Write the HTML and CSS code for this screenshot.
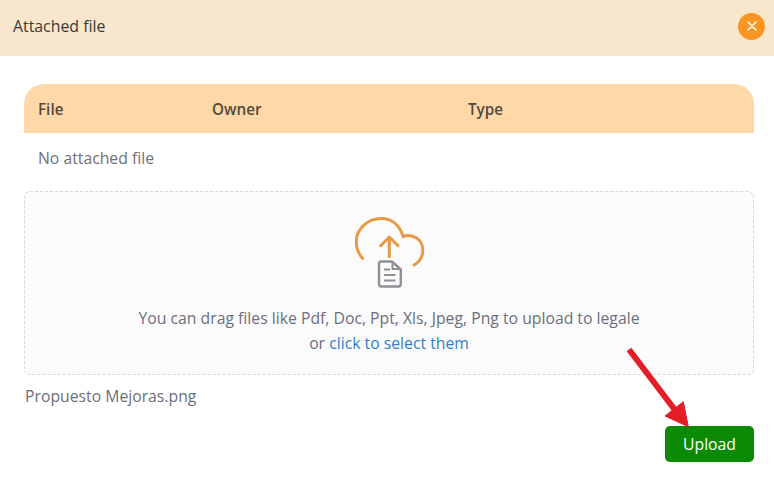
FILE: index.html
```html
<!DOCTYPE html>
<html lang="en">
<head>
<meta charset="utf-8">
<title>Attached file</title>
<link rel="stylesheet" href="styles.css">
</head>
<body>
<div class="dialog">
  <header class="dialog-header">
    <h1 class="dialog-title">Attached file</h1>
    <button class="close" aria-label="Close">
      <svg width="10" height="10" viewBox="0 0 10 10"><path d="M1 1l8 8M9 1l-8 8" stroke="#fff" stroke-width="1.5" stroke-linecap="round" fill="none"/></svg>
    </button>
  </header>
  <main class="dialog-body">
    <section class="table">
      <div class="table-head">
        <span class="col col-file">File</span>
        <span class="col col-owner">Owner</span>
        <span class="col">Type</span>
      </div>
      <div class="table-row">No attached file</div>
    </section>
    <section class="dropzone">
      <svg class="upload-icon" width="72" height="72" viewBox="0 0 72 72" fill="none">
        <path d="M7.700 41.300C3.500 37 1.300 31 1.300 25C1.300 12 12.500 1.500 26.500 1.500C36.500 1.500 44.500 8 48.300 19.700C51 18.300 54.500 18.300 57.500 19.200C64 21 67.800 26.500 67.800 33C67.800 39.500 64.500 45 59 48" stroke="#E79A45" stroke-width="3" stroke-linecap="round"/>
        <path d="M34.300 39.700V20.500M25.700 28.700L34.300 20L43 28.700" stroke="#E79A45" stroke-width="3" stroke-linecap="round" stroke-linejoin="round"/>
        <path d="M26.500 44.500C25 44.500 24 45.500 24 47V67C24 68.500 25 69.500 26.500 69.500H43.300C44.800 69.500 45.800 68.500 45.800 67V52.500L37 44.500Z" stroke="#8E9096" stroke-width="2.400" stroke-linejoin="round"/>
        <path d="M37.500 44.800V52H45.500" stroke="#8E9096" stroke-width="2" stroke-linejoin="round"/>
        <path d="M29 52.500H35M29 58H40.500M29 63.500H40.500" stroke="#8E9096" stroke-width="2"/>
      </svg>
      <p class="drop-text">You can drag files like Pdf, Doc, Ppt, Xls, Jpeg, Png to upload to legale<br>or <a class="select-link" href="#">click to select them</a></p>
    </section>
    <p class="file-name">Propuesto Mejoras.png</p>
    <div class="actions">
      <button class="upload">Upload</button>
    </div>
  </main>
  <svg class="annotation" width="80" height="90" viewBox="0 0 80 90">
    <path d="M2 2.500L48 63" stroke="#E41E26" stroke-width="6" fill="none"/>
    <path d="M61.300 79.700L38 69L56.300 54.700Z" fill="#E41E26" stroke="#E41E26" stroke-width="1"/>
  </svg>
</div>
</body>
</html>
```

FILE: styles.css
```css
* {
  box-sizing: border-box;
}

html,
body {
  margin: 0;
  padding: 0;
}

body {
  background: #fff;
  font-family: "Open Sans", sans-serif;
  font-size: 15.75px;
  color: #6c6f7b;
}

.dialog {
  position: relative;
  width: 774px;
  height: 481px;
  overflow: hidden;
}

.dialog-header {
  display: flex;
  align-items: center;
  justify-content: space-between;
  height: 56px;
  padding: 0 9px 4px 13px;
  background: #f8e6cd;
}

.dialog-title {
  margin: 0;
  font-size: 15.85px;
  font-weight: 400;
  color: #3d3a36;
}

.close {
  display: flex;
  align-items: center;
  justify-content: center;
  width: 27px;
  height: 27px;
  padding: 0;
  border: 0;
  border-radius: 50%;
  background: #fb9624;
}

.dialog-body {
  padding: 28px 20px 0 24px;
}

.table {
  border-radius: 20px;
  background: #fff;
  box-shadow: 0 0 2px rgba(0, 0, 0, 0.02);
}

.table-head {
  display: flex;
  align-items: center;
  height: 49px;
  padding: 1px 14px 0;
  border-radius: 20px 20px 0 0;
  background: #ffd8a8;
  font-size: 15.25px;
  font-weight: 600;
  color: #524a3f;
}

.col-file {
  width: 174px;
}

.col-owner {
  width: 256px;
}

.table-row {
  display: flex;
  align-items: center;
  height: 48px;
  padding: 2px 14px 0;
  color: #6f7078;
}

.dropzone {
  display: flex;
  flex-direction: column;
  align-items: center;
  height: 184px;
  margin-top: 10px;
  padding-top: 25px;
  border: 1px dashed #d8d8d8;
  border-radius: 6px;
  background: #fbfbfb;
}

.upload-icon {
  display: block;
  margin-left: 4px;
}

.drop-text {
  margin: 17px 0 0;
  line-height: 25px;
  text-align: center;
}

.select-link {
  color: #2f80c8;
  text-decoration: none;
}

.file-name {
  margin: 9px 0 0;
  padding-left: 1px;
  line-height: 24px;
}

.actions {
  display: flex;
  justify-content: flex-end;
  margin-top: 18px;
}

.upload {
  width: 89px;
  height: 36px;
  padding: 0;
  border: 0;
  border-radius: 5px;
  background: #0b8a05;
  font-family: inherit;
  font-size: 15.75px;
  color: #fff;
}

.annotation {
  position: absolute;
  left: 627px;
  top: 347px;
}
```
